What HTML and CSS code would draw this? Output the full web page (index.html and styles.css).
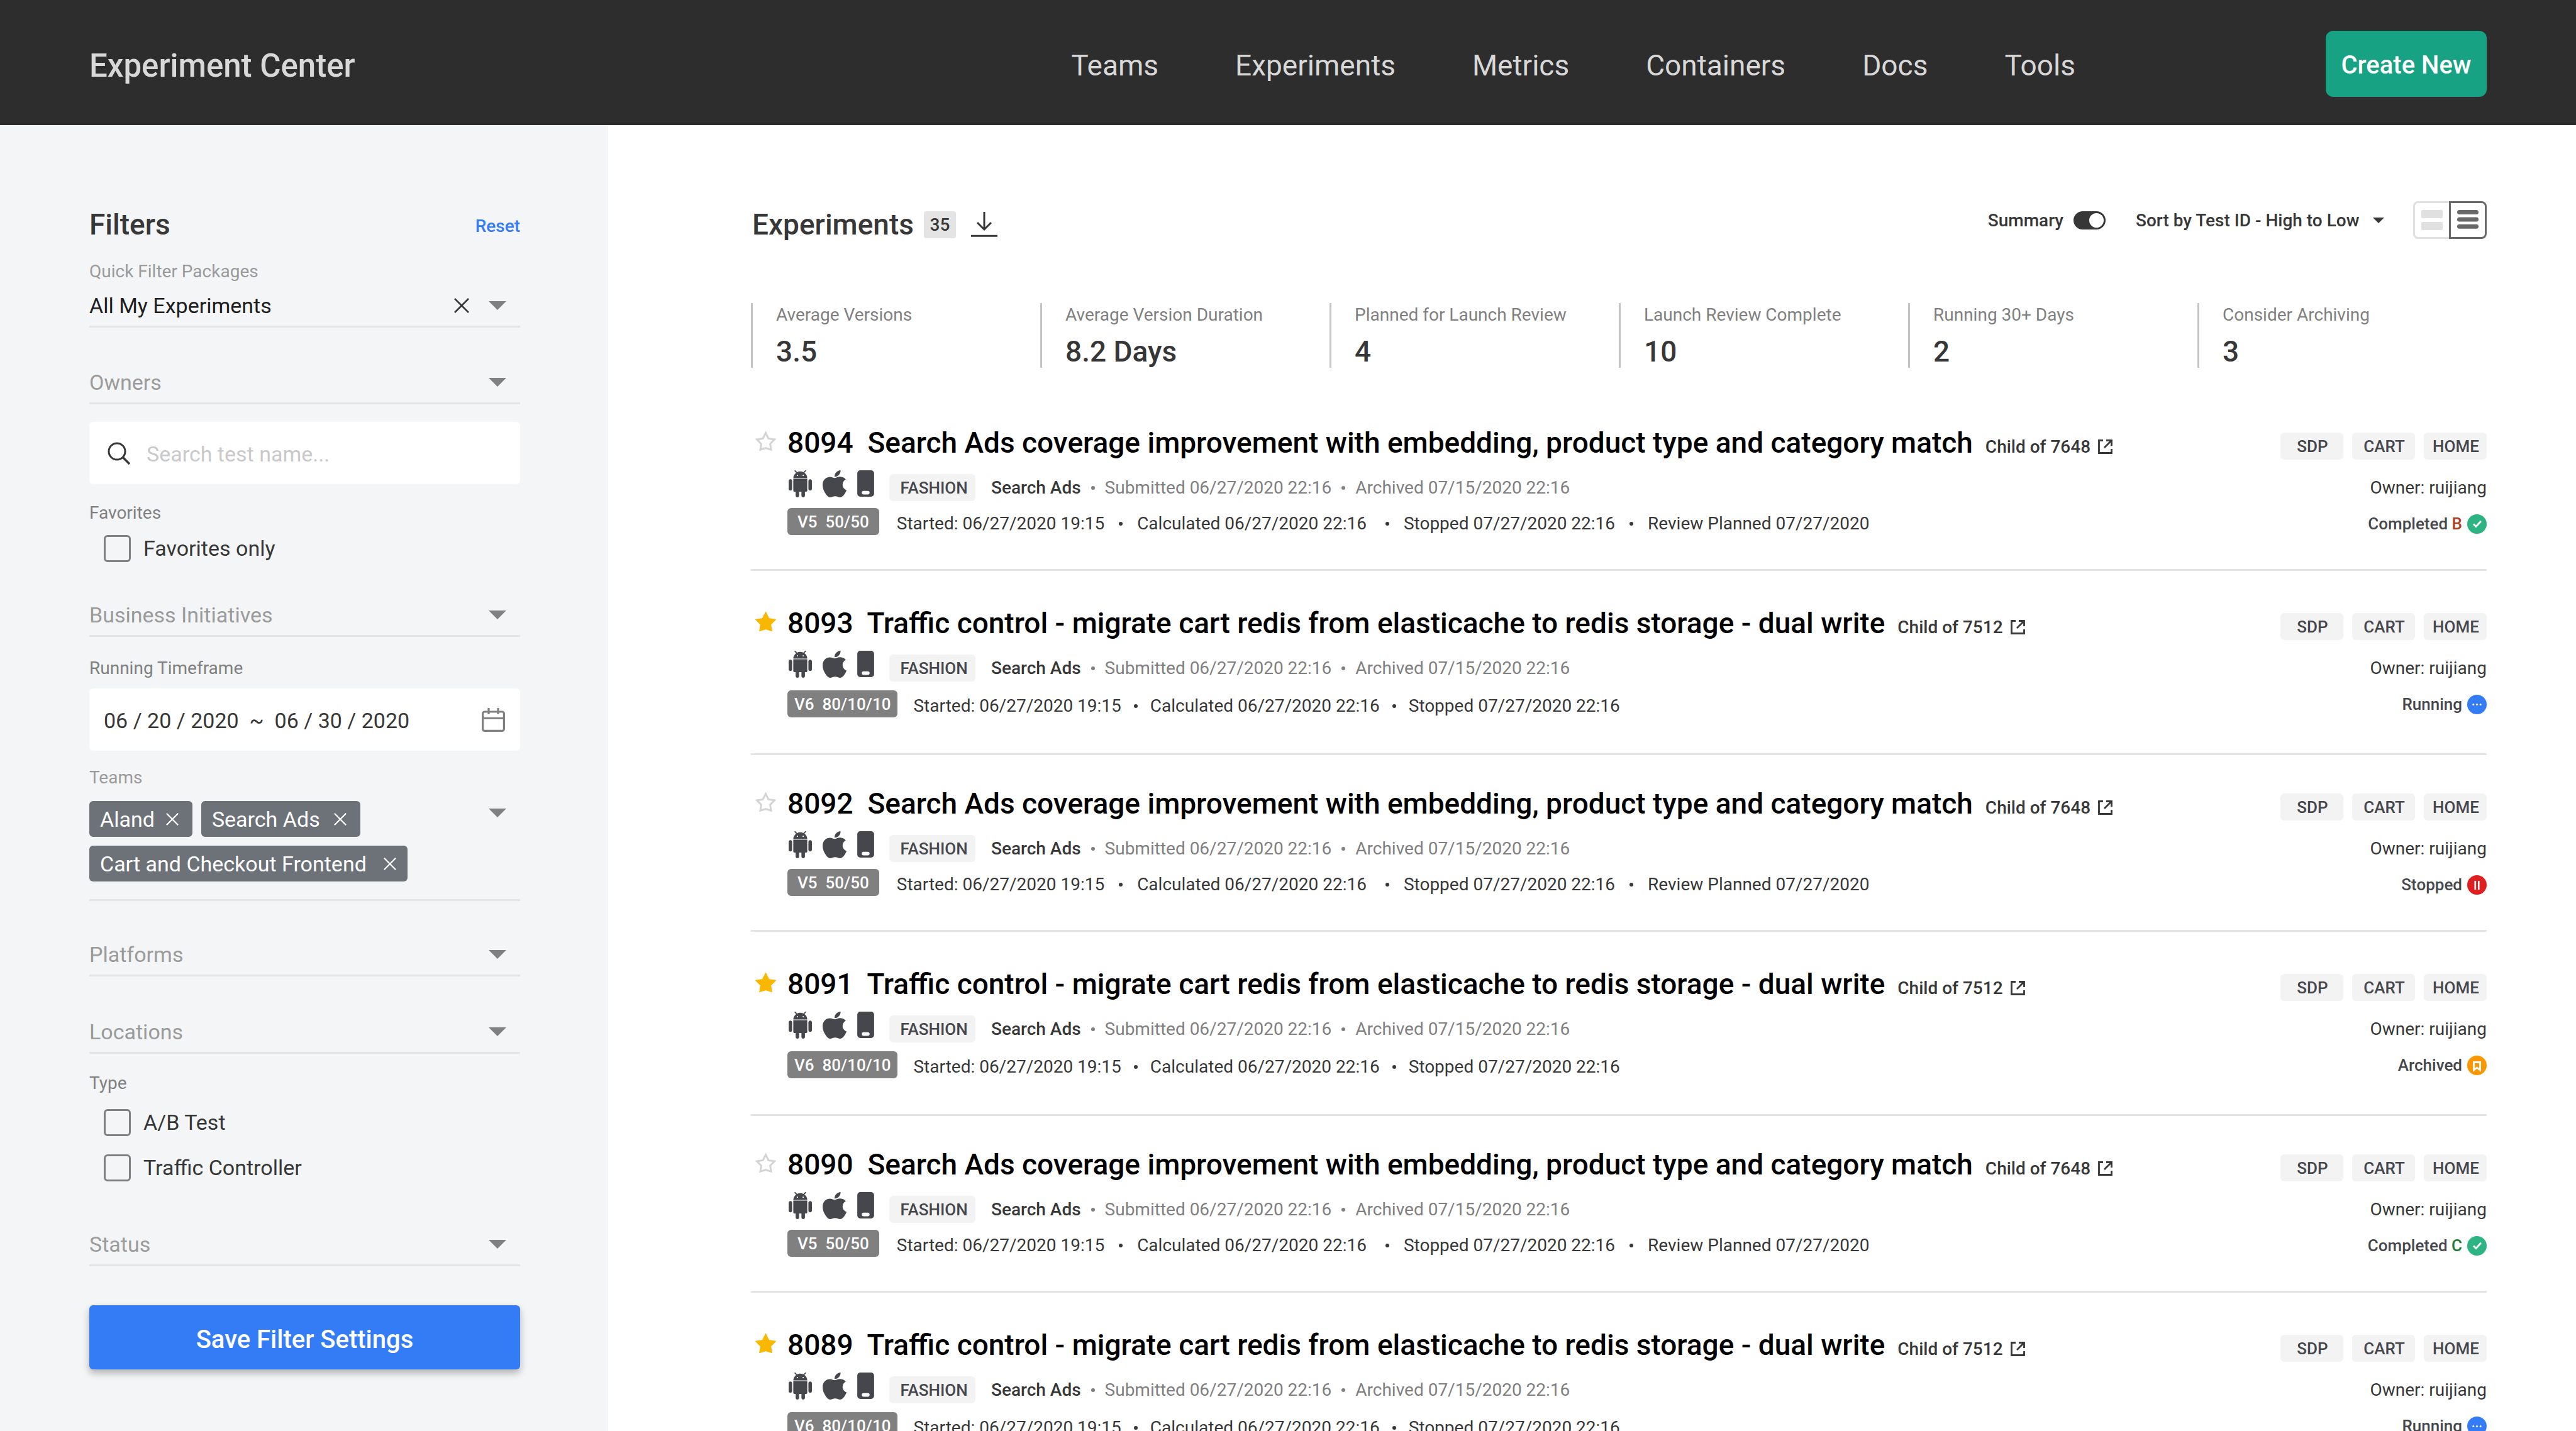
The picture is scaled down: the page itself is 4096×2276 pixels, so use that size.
FILE: index.html
```html
<!DOCTYPE html>
<html lang="en">
<head>
<meta charset="utf-8">
<title>Experiment Center</title>
<link rel="stylesheet" href="styles.css">
</head>
<body>
<svg class="sprite" aria-hidden="true">
  <symbol id="i-caret" viewBox="0 0 28 14"><path d="M0 0h28L14 14z"/></symbol>
  <symbol id="i-close" viewBox="0 0 24 24"><path d="M1 1l22 22M23 1L1 23" fill="none" stroke="currentColor" stroke-width="2.6"/></symbol>
  <symbol id="i-star" viewBox="0 0 33 31"><path d="M16.500 2.500l4.400 8.900 9.600 1.500-6.900 7 1.500 9.300-8.600-2.700-8.600 2.700 1.500-9.300-6.900-7 9.600-1.500z"/></symbol>
  <symbol id="i-android" viewBox="2 0 20 24" preserveAspectRatio="none"><path d="M6 18c0 .55.45 1 1 1h1v3.500c0 .83.67 1.500 1.500 1.500s1.500-.67 1.500-1.500V19h2v3.500c0 .83.67 1.500 1.500 1.500s1.500-.67 1.500-1.500V19h1c.55 0 1-.45 1-1V7.600H6V18zM3.500 8C2.670 8 2 8.670 2 9.500v7c0 .83.67 1.500 1.500 1.500S5 17.330 5 16.500v-7C5 8.670 4.330 8 3.500 8zm17 0c-.83 0-1.500.67-1.500 1.500v7c0 .83.67 1.500 1.500 1.500s1.500-.67 1.500-1.500v-7c0-.83-.67-1.500-1.500-1.500zm-4.970-5.840l1.300-1.300c.2-.2.2-.51 0-.71-.2-.2-.51-.2-.71 0l-1.480 1.480C13.850 1.230 12.950 1 12 1c-.96 0-1.860.23-2.660.63L7.850.15c-.2-.2-.51-.2-.71 0-.2.2-.2.51 0 .71l1.310 1.310C6.970 3.260 6 5.010 6 7h12c0-1.990-.97-3.750-2.470-4.840zM10 5H9V4h1v1zm5 0h-1V4h1v1z"/></symbol>
  <symbol id="i-apple" viewBox="4 32 376 448" preserveAspectRatio="none"><path d="M318.700 268.700c-.2-36.700 16.400-64.400 50-84.800-18.800-26.900-47.200-41.700-84.700-44.600-35.500-2.800-74.300 20.700-88.500 20.700-15 0-49.400-19.700-76.400-19.700C63.300 141.200 4 184.800 4 273.500q0 39.300 14.400 81.200c12.800 36.700 59 126.700 107.200 125.200 25.200-.6 43-17.900 75.800-17.900 31.800 0 48.300 17.900 76.400 17.900 48.600-.7 90.400-82.500 102.600-119.300-65.200-30.700-61.700-90-61.700-91.900zm-56.600-164.200c27.300-32.400 24.800-61.900 24-72.500-24.100 1.400-52 16.400-67.900 34.900-17.500 19.800-27.800 44.300-25.600 71.900 26.100 2 49.900-11.400 69.500-34.300z"/></symbol>
  <symbol id="i-phone" viewBox="0 0 28 44"><path fill-rule="evenodd" d="M5 0h18a5 5 0 0 1 5 5v34a5 5 0 0 1-5 5H5a5 5 0 0 1-5-5V5a5 5 0 0 1 5-5zM10.500 34.300a3 3 0 0 0 0 6h7a3 3 0 0 0 0-6z"/></symbol>
  <symbol id="i-open" viewBox="0 0 23 23"><path d="M8 1.500H1.500v20h20V15M13 1.500h8.500V10M21 2L10 13" fill="none" stroke="currentColor" stroke-width="2.800"/></symbol>
  <symbol id="i-done" viewBox="0 0 31 31"><circle cx="15.500" cy="15.500" r="15.500" fill="#2eb482"/><path d="M10 15.500l4 4 8-8.800" fill="none" stroke="#fff" stroke-width="2.800"/></symbol>
  <symbol id="i-running" viewBox="0 0 31 31"><circle cx="15.500" cy="15.500" r="15.500" fill="#347cf6"/><g fill="#fff"><circle cx="9.800" cy="15.500" r="1.500"/><circle cx="15.500" cy="15.500" r="1.500"/><circle cx="21.200" cy="15.500" r="1.500"/></g></symbol>
  <symbol id="i-stopped" viewBox="0 0 31 31"><circle cx="15.500" cy="15.500" r="15.500" fill="#e02020"/><path d="M11.500 9h2.600v14h-2.600zM17 9h2.600v14H17z" fill="#fff"/></symbol>
  <symbol id="i-archived" viewBox="0 0 31 31"><circle cx="15.500" cy="15.500" r="15.500" fill="#fa9600"/><path d="M10.500 10.500h10V23l-5-4-5 4z" fill="none" stroke="#fff" stroke-width="2.800"/></symbol>
</svg>

<div class="app">
  <header class="topbar">
    <h1 class="brand">Experiment Center</h1>
    <nav class="nav">
      <a href="#">Teams</a>
      <a href="#">Experiments</a>
      <a href="#">Metrics</a>
      <a href="#">Containers</a>
      <a href="#">Docs</a>
      <a href="#">Tools</a>
    </nav>
    <button class="create" type="button">Create New</button>
  </header>

  <div class="layout">
    <aside class="sidebar">
      <div class="sidebar-head">
        <h2 class="heading">Filters</h2>
        <a class="reset" href="#">Reset</a>
      </div>

      <label class="caption caption-light" for="package">Quick Filter Packages</label>
      <div class="select select-package">
        <select id="package" class="chosen"><option>All My Experiments</option></select>
        <button class="clear" type="button" aria-label="Clear package"><svg><use href="#i-close"/></svg></button>
        <svg class="caret"><use href="#i-caret"/></svg>
      </div>

      <div class="select select-owners">
        <select aria-label="Owners"><option>Owners</option></select>
        <svg class="caret"><use href="#i-caret"/></svg>
      </div>

      <div class="box">
        <svg class="search-icon" viewBox="0 0 36 36"><circle cx="15" cy="15" r="13" fill="none" stroke="currentColor" stroke-width="3"/><path d="M24 24l11 11" stroke="currentColor" stroke-width="3.500"/></svg>
        <input class="box-input" type="text" placeholder="Search test name..." aria-label="Search test name">
      </div>

      <div class="group group-favorites">
        <p class="caption">Favorites</p>
        <div class="checks"><label class="check"><input type="checkbox">Favorites only</label></div>
      </div>

      <div class="select select-initiatives">
        <select aria-label="Business Initiatives"><option>Business Initiatives</option></select>
        <svg class="caret"><use href="#i-caret"/></svg>
      </div>

      <label class="caption caption-dates" for="dates">Running Timeframe</label>
      <div class="box box-dates">
        <input class="box-input" id="dates" type="text" value="06 / 20 / 2020&nbsp; ~&nbsp; 06 / 30 / 2020">
        <svg class="calendar-icon" viewBox="0 0 37 38"><g fill="none" stroke="currentColor" stroke-width="3.200"><rect x="1.600" y="6" width="33.800" height="30.400" rx="3"/><path d="M2 16.500h33M11 0v10M26 0v10"/></g></svg>
      </div>

      <p class="caption caption-light">Teams</p>
      <div class="teams">
        <div class="team-list">
          <span class="team">Aland<button type="button" aria-label="Remove Aland"><svg><use href="#i-close"/></svg></button></span>
          <span class="team">Search Ads<button type="button" aria-label="Remove Search Ads"><svg><use href="#i-close"/></svg></button></span>
          <span class="team team-long">Cart and Checkout Frontend<button type="button" aria-label="Remove Cart and Checkout Frontend"><svg><use href="#i-close"/></svg></button></span>
        </div>
        <svg class="caret"><use href="#i-caret"/></svg>
      </div>

      <div class="select select-platforms">
        <select aria-label="Platforms"><option>Platforms</option></select>
        <svg class="caret"><use href="#i-caret"/></svg>
      </div>
      <div class="select select-locations">
        <select aria-label="Locations"><option>Locations</option></select>
        <svg class="caret"><use href="#i-caret"/></svg>
      </div>

      <div class="group group-type">
        <p class="caption">Type</p>
        <div class="checks">
          <label class="check"><input type="checkbox">A/B Test</label>
          <label class="check"><input type="checkbox">Traffic Controller</label>
        </div>
      </div>

      <div class="select select-status">
        <select aria-label="Status"><option>Status</option></select>
        <svg class="caret"><use href="#i-caret"/></svg>
      </div>

      <button class="save" type="button">Save Filter Settings</button>
    </aside>

    <main class="main">
      <div class="toolbar">
        <div class="toolbar-title">
          <h2 class="heading">Experiments</h2>
          <span class="count">35</span>
          <button class="download" type="button" aria-label="Download"><svg viewBox="0 0 42 40"><path d="M21 0v27M10 17l11 11 11-11M0 38.300h42" fill="none" stroke="currentColor" stroke-width="3"/></svg></button>
        </div>
        <div class="toolbar-tools">
          <label class="summary">Summary<input type="checkbox" class="switch" checked></label>
          <div class="sort">
            <select aria-label="Sort order"><option>Sort by Test ID - High to Low</option></select>
            <svg><use href="#i-caret"/></svg>
          </div>
          <div class="views">
            <button class="view view-cards" type="button" aria-label="Card view"><svg viewBox="0 0 34 34"><path d="M2 1h30a2 2 0 0 1 2 2v9a2 2 0 0 1-2 2H2a2 2 0 0 1-2-2V3a2 2 0 0 1 2-2zM2 20h30a2 2 0 0 1 2 2v9a2 2 0 0 1-2 2H2a2 2 0 0 1-2-2v-9a2 2 0 0 1 2-2z"/></svg></button>
            <button class="view view-list" type="button" aria-label="List view"><svg viewBox="0 0 34 34"><path d="M3.500 4.500h27M3.500 16h27M3.500 27.300h27" stroke="currentColor" stroke-width="7" stroke-linecap="round"/></svg></button>
          </div>
        </div>
      </div>

      <dl class="stats">
        <div class="stat"><dt>Average Versions</dt><dd>3.5</dd></div>
        <div class="stat"><dt>Average Version Duration</dt><dd>8.2 Days</dd></div>
        <div class="stat"><dt>Planned for Launch Review</dt><dd>4</dd></div>
        <div class="stat"><dt>Launch Review Complete</dt><dd>10</dd></div>
        <div class="stat"><dt>Running 30+ Days</dt><dd>2</dd></div>
        <div class="stat"><dt>Consider Archiving</dt><dd>3</dd></div>
      </dl>

      <article class="card">
        <button class="star" type="button" aria-label="Add to favorites"><svg><use href="#i-star"/></svg></button>
        <div class="info">
          <div class="title-row"><h3 class="title">8094&nbsp; Search Ads coverage improvement with embedding, product type and category match</h3><a class="parent" href="#">Child of 7648<svg><use href="#i-open"/></svg></a></div>
          <div class="meta"><span class="platforms"><svg class="android"><use href="#i-android"/></svg><svg class="apple"><use href="#i-apple"/></svg><svg class="phone"><use href="#i-phone"/></svg></span><span class="category">FASHION</span><strong>Search Ads</strong><i class="dot"></i><span>Submitted 06/27/2020 22:16</span><i class="dot"></i><span>Archived 07/15/2020 22:16</span></div>
          <div class="run"><span class="version">V5&nbsp; 50/50</span><span class="times"><span>Started: 06/27/2020 19:15</span><i class="dot"></i><span>Calculated 06/27/2020 22:16&nbsp;</span><i class="dot"></i><span>Stopped 07/27/2020 22:16</span><i class="dot"></i><span>Review Planned 07/27/2020</span></span></div>
        </div>
        <div class="side">
          <div class="tags"><span class="tag">SDP</span><span class="tag">CART</span><span class="tag">HOME</span></div>
          <p class="owner">Owner: ruijiang</p>
          <p class="status">Completed <b class="winner-b">B</b><svg><use href="#i-done"/></svg></p>
        </div>
      </article>

      <article class="card card-control">
        <button class="star star-on" type="button" aria-label="Remove from favorites"><svg><use href="#i-star"/></svg></button>
        <div class="info">
          <div class="title-row"><h3 class="title">8093&nbsp; Traffic control - migrate cart redis from elasticache to redis storage - dual write</h3><a class="parent" href="#">Child of 7512<svg><use href="#i-open"/></svg></a></div>
          <div class="meta"><span class="platforms"><svg class="android"><use href="#i-android"/></svg><svg class="apple"><use href="#i-apple"/></svg><svg class="phone"><use href="#i-phone"/></svg></span><span class="category">FASHION</span><strong>Search Ads</strong><i class="dot"></i><span>Submitted 06/27/2020 22:16</span><i class="dot"></i><span>Archived 07/15/2020 22:16</span></div>
          <div class="run"><span class="version">V6&nbsp; 80/10/10</span><span class="times"><span>Started: 06/27/2020 19:15</span><i class="dot"></i><span>Calculated 06/27/2020 22:16</span><i class="dot"></i><span>Stopped 07/27/2020 22:16</span></span></div>
        </div>
        <div class="side">
          <div class="tags"><span class="tag">SDP</span><span class="tag">CART</span><span class="tag">HOME</span></div>
          <p class="owner">Owner: ruijiang</p>
          <p class="status">Running<svg><use href="#i-running"/></svg></p>
        </div>
      </article>

      <article class="card">
        <button class="star" type="button" aria-label="Add to favorites"><svg><use href="#i-star"/></svg></button>
        <div class="info">
          <div class="title-row"><h3 class="title">8092&nbsp; Search Ads coverage improvement with embedding, product type and category match</h3><a class="parent" href="#">Child of 7648<svg><use href="#i-open"/></svg></a></div>
          <div class="meta"><span class="platforms"><svg class="android"><use href="#i-android"/></svg><svg class="apple"><use href="#i-apple"/></svg><svg class="phone"><use href="#i-phone"/></svg></span><span class="category">FASHION</span><strong>Search Ads</strong><i class="dot"></i><span>Submitted 06/27/2020 22:16</span><i class="dot"></i><span>Archived 07/15/2020 22:16</span></div>
          <div class="run"><span class="version">V5&nbsp; 50/50</span><span class="times"><span>Started: 06/27/2020 19:15</span><i class="dot"></i><span>Calculated 06/27/2020 22:16&nbsp;</span><i class="dot"></i><span>Stopped 07/27/2020 22:16</span><i class="dot"></i><span>Review Planned 07/27/2020</span></span></div>
        </div>
        <div class="side">
          <div class="tags"><span class="tag">SDP</span><span class="tag">CART</span><span class="tag">HOME</span></div>
          <p class="owner">Owner: ruijiang</p>
          <p class="status">Stopped<svg><use href="#i-stopped"/></svg></p>
        </div>
      </article>

      <article class="card card-control">
        <button class="star star-on" type="button" aria-label="Remove from favorites"><svg><use href="#i-star"/></svg></button>
        <div class="info">
          <div class="title-row"><h3 class="title">8091&nbsp; Traffic control - migrate cart redis from elasticache to redis storage - dual write</h3><a class="parent" href="#">Child of 7512<svg><use href="#i-open"/></svg></a></div>
          <div class="meta"><span class="platforms"><svg class="android"><use href="#i-android"/></svg><svg class="apple"><use href="#i-apple"/></svg><svg class="phone"><use href="#i-phone"/></svg></span><span class="category">FASHION</span><strong>Search Ads</strong><i class="dot"></i><span>Submitted 06/27/2020 22:16</span><i class="dot"></i><span>Archived 07/15/2020 22:16</span></div>
          <div class="run"><span class="version">V6&nbsp; 80/10/10</span><span class="times"><span>Started: 06/27/2020 19:15</span><i class="dot"></i><span>Calculated 06/27/2020 22:16</span><i class="dot"></i><span>Stopped 07/27/2020 22:16</span></span></div>
        </div>
        <div class="side">
          <div class="tags"><span class="tag">SDP</span><span class="tag">CART</span><span class="tag">HOME</span></div>
          <p class="owner">Owner: ruijiang</p>
          <p class="status">Archived<svg><use href="#i-archived"/></svg></p>
        </div>
      </article>

      <article class="card">
        <button class="star" type="button" aria-label="Add to favorites"><svg><use href="#i-star"/></svg></button>
        <div class="info">
          <div class="title-row"><h3 class="title">8090&nbsp; Search Ads coverage improvement with embedding, product type and category match</h3><a class="parent" href="#">Child of 7648<svg><use href="#i-open"/></svg></a></div>
          <div class="meta"><span class="platforms"><svg class="android"><use href="#i-android"/></svg><svg class="apple"><use href="#i-apple"/></svg><svg class="phone"><use href="#i-phone"/></svg></span><span class="category">FASHION</span><strong>Search Ads</strong><i class="dot"></i><span>Submitted 06/27/2020 22:16</span><i class="dot"></i><span>Archived 07/15/2020 22:16</span></div>
          <div class="run"><span class="version">V5&nbsp; 50/50</span><span class="times"><span>Started: 06/27/2020 19:15</span><i class="dot"></i><span>Calculated 06/27/2020 22:16&nbsp;</span><i class="dot"></i><span>Stopped 07/27/2020 22:16</span><i class="dot"></i><span>Review Planned 07/27/2020</span></span></div>
        </div>
        <div class="side">
          <div class="tags"><span class="tag">SDP</span><span class="tag">CART</span><span class="tag">HOME</span></div>
          <p class="owner">Owner: ruijiang</p>
          <p class="status">Completed <b class="winner-c">C</b><svg><use href="#i-done"/></svg></p>
        </div>
      </article>

      <article class="card card-control">
        <button class="star star-on" type="button" aria-label="Remove from favorites"><svg><use href="#i-star"/></svg></button>
        <div class="info">
          <div class="title-row"><h3 class="title">8089&nbsp; Traffic control - migrate cart redis from elasticache to redis storage - dual write</h3><a class="parent" href="#">Child of 7512<svg><use href="#i-open"/></svg></a></div>
          <div class="meta"><span class="platforms"><svg class="android"><use href="#i-android"/></svg><svg class="apple"><use href="#i-apple"/></svg><svg class="phone"><use href="#i-phone"/></svg></span><span class="category">FASHION</span><strong>Search Ads</strong><i class="dot"></i><span>Submitted 06/27/2020 22:16</span><i class="dot"></i><span>Archived 07/15/2020 22:16</span></div>
          <div class="run"><span class="version">V6&nbsp; 80/10/10</span><span class="times"><span>Started: 06/27/2020 19:15</span><i class="dot"></i><span>Calculated 06/27/2020 22:16</span><i class="dot"></i><span>Stopped 07/27/2020 22:16</span></span></div>
        </div>
        <div class="side">
          <div class="tags"><span class="tag">SDP</span><span class="tag">CART</span><span class="tag">HOME</span></div>
          <p class="owner">Owner: ruijiang</p>
          <p class="status">Running<svg><use href="#i-running"/></svg></p>
        </div>
      </article>
    </main>
  </div>
</div>
</body>
</html>
```
FILE: styles.css
```css
* { box-sizing: border-box; }
body {
  margin: 0;
  font-family: Roboto, "Liberation Sans", sans-serif;
  font-size: 28px;
  color: #373737;
  background: #fff;
}
h1, h2, h3, p, dl, dd { margin: 0; }
button, input, select { font: inherit; color: inherit; }
button {
  display: flex;
  align-items: center;
  justify-content: center;
  padding: 0;
  border: 0;
  background: none;
  cursor: pointer;
}
select {
  appearance: none;
  padding: 0;
  border: 0;
  background: none;
  outline: none;
}
a { color: inherit; text-decoration: none; }
svg { display: block; flex: none; fill: currentColor; }
.sprite { display: none; }

.app {
  display: flex;
  flex-direction: column;
  height: 100vh;
  overflow: hidden;
}

/* Top bar */
.topbar {
  display: flex;
  flex: none;
  align-items: center;
  height: 199px;
  padding: 4px 142px 0;
  background: #2d2d2d;
  color: #d8d8d8;
}
.brand {
  padding-top: 6px;
  font-size: 51px;
  font-weight: 500;
  line-height: 64px;
}
.nav {
  display: flex;
  gap: 122px;
  margin-left: auto;
  margin-right: 398px;
  padding-top: 5px;
  font-size: 46px;
  line-height: 60px;
}
.create {
  width: 256px;
  height: 105px;
  padding-top: 4px;
  border-radius: 12px;
  background: #17a284;
  color: #fff;
  font-size: 40px;
  font-weight: 500;
}

.layout {
  display: grid;
  flex: 1;
  grid-template-columns: 967px minmax(0, 1fr);
  min-height: 0;
}
.heading { font-size: 46px; font-weight: 500; line-height: 60px; }

/* Filters */
.sidebar {
  padding: 128px 140px 0 142px;
  background: #f3f5f7;
  overflow: hidden;
}
.sidebar-head {
  display: flex;
  align-items: flex-end;
  justify-content: space-between;
  margin-bottom: 24px;
}
.reset { color: #347cf6; font-weight: 500; line-height: 54px; }
.caption { display: block; line-height: 42px; color: #808080; }
.caption-light { color: #9b9b9b; }
.caption-dates { margin: 29px 0 11px; }
.caret { width: 28px; height: 14px; color: #808080; }
.select {
  display: flex;
  align-items: center;
  height: 67px;
  padding-right: 22px;
  border-bottom: 3px solid #e4e4e6;
  font-size: 34px;
}
.select select { flex: 1; min-width: 0; color: #9b9b9b; }
.select .chosen { color: #1e1e1e; }
.clear { margin-right: 31px; }
.clear svg { width: 24px; height: 24px; }
.select-package { margin: 1px 0 55px; }
.select-owners { margin-bottom: 28px; }
.select-platforms { margin: 53px 0 56px; }
.select-locations { margin-bottom: 26px; }
.select-status { margin-bottom: 62px; }

.box {
  display: flex;
  align-items: center;
  height: 99px;
  padding: 0 24px 0 29px;
  border-radius: 6px;
  background: #fff;
  font-size: 34px;
}
.box-input {
  flex: 1;
  min-width: 0;
  padding: 3px 0 0;
  border: 0;
  background: none;
  outline: none;
}
.box-input::placeholder { color: #c9c9c9; opacity: 1; }
.search-icon { width: 36px; height: 36px; margin-right: 26px; }
.box-dates { margin-bottom: 22px; padding-left: 23px; }
.calendar-icon { width: 37px; height: 38px; color: #808080; }

.group-favorites { margin: 25px 0 52px; }
.group-type { margin-bottom: 68px; }
.checks {
  display: flex;
  flex-direction: column;
  gap: 28px;
  padding-left: 23px;
}
.group-favorites .checks { margin-top: 13px; }
.group-type .checks { margin-top: 19px; }
.check {
  display: flex;
  align-items: center;
  gap: 20px;
  height: 44px;
  font-size: 34px;
}
.check input {
  appearance: none;
  width: 43px;
  height: 43px;
  margin: 0;
  border: 3px solid #808080;
  border-radius: 6px;
}

.teams {
  display: flex;
  align-items: flex-start;
  justify-content: space-between;
  margin-top: 16px;
  padding: 0 22px 28px 0;
  border-bottom: 3px solid #e4e4e6;
}
.teams .caret { margin-top: 12px; }
.team-list { display: flex; flex: 1; flex-wrap: wrap; gap: 14px; }
.team {
  display: flex;
  align-items: center;
  gap: 18px;
  height: 57px;
  padding: 0 22px 0 17px;
  border-radius: 6px;
  background: #6d7278;
  color: #fff;
  font-size: 34px;
}
.team + .team { gap: 22px; }
.team svg { width: 20px; height: 20px; }
.team + .team-long { gap: 27px; padding-right: 18px; }

.save {
  width: 100%;
  height: 102px;
  padding-top: 6px;
  border-radius: 6px;
  background: #347cf6;
  box-shadow: 0 6px 12px rgba(0, 0, 0, 0.28);
  color: #fff;
  font-size: 40px;
  font-weight: 500;
}

/* Experiments */
.main { padding: 121px 142px 0 227px; overflow: hidden; }
.toolbar {
  display: flex;
  align-items: flex-start;
  justify-content: space-between;
}
.toolbar-title {
  display: flex;
  align-items: center;
  height: 74px;
  padding-left: 2px;
}
.count {
  width: 51px;
  margin-left: 16px;
  border-radius: 4px;
  background: #e4e4e4;
  font-weight: 500;
  line-height: 43px;
  text-align: center;
}
.download { margin-left: 24px; }
.download svg { width: 42px; height: 40px; }
.toolbar-tools {
  display: flex;
  align-items: center;
  height: 60px;
  font-weight: 500;
}
.summary { display: flex; align-items: center; gap: 16px; }
.switch {
  appearance: none;
  display: flex;
  justify-content: flex-end;
  width: 51px;
  height: 29px;
  margin: 0;
  padding: 3px;
  border-radius: 15px;
  background: #373737;
}
.switch::before {
  content: "";
  width: 23px;
  height: 23px;
  border-radius: 50%;
  background: #fff;
}
.sort {
  display: flex;
  align-items: center;
  gap: 20px;
  margin: 0 46px 0 48px;
}
.sort svg { width: 18px; height: 9px; }
.views { display: flex; }
.view {
  width: 60px;
  height: 60px;
  border: 3px solid;
}
.view svg { width: 34px; height: 34px; }
.view-cards {
  width: 57px;
  border-right: 0;
  border-radius: 8px 0 0 8px;
  color: #e0e0e0;
}
.view-list { border-radius: 0 8px 8px 0; color: #686868; }

.stats {
  display: grid;
  grid-template-columns: repeat(6, 1fr);
  margin: 88px 0 92px;
}
.stat {
  height: 103px;
  padding-left: 37px;
  border-left: 3px solid #c4c4c4;
}
.stat dt { color: #808080; line-height: 38px; }
.stat dd {
  margin-top: 9px;
  font-size: 46px;
  font-weight: 500;
  line-height: 60px;
}

.card {
  display: grid;
  grid-template-columns: 58px minmax(0, 1fr) auto;
  margin-bottom: 56px;
  padding-bottom: 52px;
  border-bottom: 3px solid #e4e4e4;
}
.card-control { margin-bottom: 50px; padding-bottom: 57px; }
.star { align-self: start; width: 33px; margin: 9px 0 0 7px; }
.star svg {
  width: 33px;
  height: 31px;
  fill: none;
  stroke: #d4d4d4;
  stroke-width: 3px;
}
.star-on svg { fill: #f9b700; stroke: #f9b700; }
.title-row { display: flex; align-items: baseline; gap: 20px; }
.title {
  color: #000;
  font-size: 46px;
  font-weight: 500;
  line-height: 54px;
  white-space: nowrap;
}
.parent {
  display: flex;
  align-items: center;
  gap: 12px;
  font-weight: 500;
  white-space: nowrap;
}
.parent svg { width: 23px; height: 23px; }
.meta {
  display: flex;
  align-items: center;
  height: 43px;
  margin-top: 23px;
  gap: 16px;
  color: #808080;
  white-space: nowrap;
}
.platforms {
  display: flex;
  align-self: flex-start;
  gap: 17px;
  width: 146px;
  margin-top: -6px;
  padding-left: 2px;
  color: #46474d;
}
.android { width: 37px; height: 43px; }
.apple { width: 38px; height: 43px; }
.phone { width: 27px; height: 42px; }
.category {
  width: 137px;
  height: 43px;
  margin-right: 9px;
  padding-left: 5px;
  border-radius: 6px;
  background: #f3f3f3;
  color: #46474d;
  font-size: 26px;
  font-weight: 500;
  line-height: 45px;
  text-align: center;
}
.meta strong { color: #373737; font-weight: 500; }
.dot {
  width: 6px;
  height: 6px;
  border-radius: 50%;
  background: currentColor;
}
.run {
  display: flex;
  height: 43px;
  margin-top: 11px;
  white-space: nowrap;
}
.card-control .run { margin-top: 14px; }
.version {
  margin-right: 28px;
  padding: 0 16px;
  border-radius: 6px;
  background: #808080;
  color: #fff;
  font-size: 26px;
  font-weight: 500;
  line-height: 44px;
}
.card-control .version { margin-right: 25px; padding: 0 11px; }
.times { display: flex; align-items: center; gap: 23px; padding-top: 6px; }
.card-control .times { gap: 20px; }

.side {
  display: flex;
  flex-direction: column;
  align-items: flex-end;
  padding-top: 11px;
}
.tags { display: flex; gap: 14px; }
.tag {
  width: 100px;
  height: 43px;
  padding-left: 2px;
  border-radius: 6px;
  background: #f3f3f3;
  color: #46474d;
  font-size: 26px;
  font-weight: 500;
  line-height: 45px;
  text-align: center;
}
.owner { margin-top: 25px; line-height: 40px; }
.status {
  display: flex;
  align-items: center;
  height: 40px;
  margin-top: 17px;
  color: #46474d;
  font-size: 26px;
  font-weight: 500;
  white-space: pre;
}
.status svg { width: 31px; height: 31px; margin-left: 8px; }
.status b { font-weight: 500; }
.winner-b { color: #b03c1e; }
.winner-c { color: #217a34; }
```
